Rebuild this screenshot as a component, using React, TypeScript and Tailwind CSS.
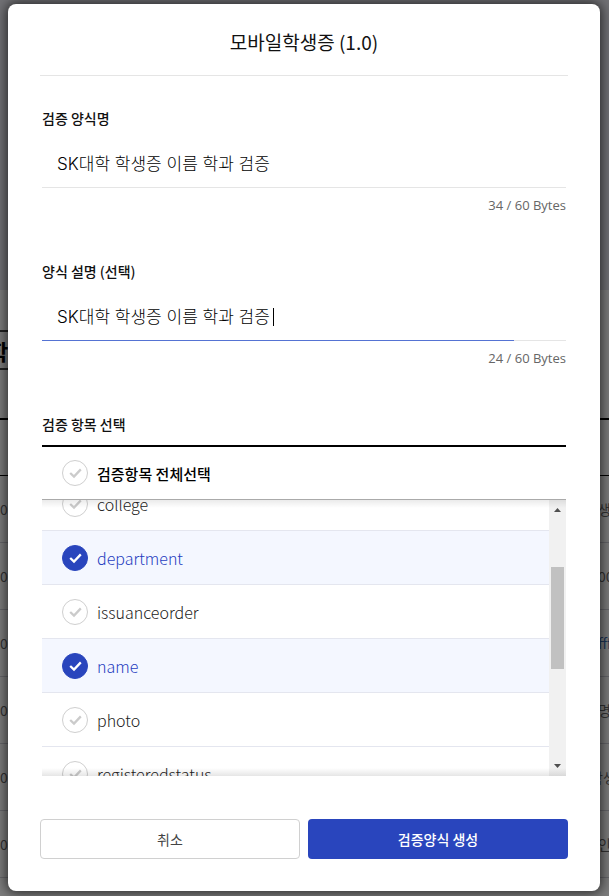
import { useLayoutEffect, useRef, useState } from "react";

const attributes = [
  { id: "college", checked: false },
  { id: "department", checked: true },
  { id: "issuanceorder", checked: false },
  { id: "name", checked: true },
  { id: "photo", checked: false },
  { id: "registeredstatus", checked: false },
];

const tableRows = [
  { code: "0", value: "생", style: "w-[11px] text-[#333]" },
  { code: "0", value: "00", style: "w-[11px] text-[#333]" },
  { code: "0", value: "fff", style: "w-[11px] text-[#1d3557]" },
  { code: "0", value: "명", style: "w-[11px] text-[#333]" },
  { code: "0", value: "학생", style: "w-[19px] text-[#333]" },
  { code: "0", value: "인", style: "w-[11px] text-[#333]" },
];

function BackgroundPage() {
  return (
    <div aria-hidden="true" className="absolute inset-0 overflow-hidden bg-[#7d7d7d]">
      <div className="h-[290px] bg-[#727276]" />
      <div className="mt-10 flex h-10 w-32 items-center border-y-2 border-[#222] text-[22px] font-bold text-black">
        <span className="-ml-3">학</span>
      </div>
      <div className="mt-12 h-[58px] border-t-2 border-b border-black" />
      {tableRows.map((row, i) => (
        <div
          key={i}
          className="flex h-[67px] items-center justify-between border-b border-[#66666a] text-[14px]"
        >
          <span className="w-3 text-[#333]">{row.code}</span>
          <span className={`whitespace-nowrap ${row.style}`}>{row.value}</span>
        </div>
      ))}
    </div>
  );
}

function RoundCheck({
  id,
  checked,
  onChange,
}: {
  id: string;
  checked: boolean;
  onChange: () => void;
}) {
  return (
    <span className="relative flex size-[26px] shrink-0">
      <input
        id={id}
        type="checkbox"
        checked={checked}
        onChange={onChange}
        className="peer size-[26px] appearance-none rounded-full border border-[#cfcfcf] bg-white checked:border-[#2945bd] checked:bg-[#2945bd]"
      />
      <svg
        viewBox="0 0 26 26"
        className="pointer-events-none absolute inset-0 size-[26px] text-[#cbcbcb] peer-checked:text-white"
        fill="none"
        stroke="currentColor"
        strokeWidth="2.3"
      >
        <path d="M8.2 13 L12 16.6 L18.8 9.4" />
      </svg>
    </span>
  );
}

function TextField({
  id,
  label,
  initial,
  bytes,
  active = false,
}: {
  id: string;
  label: string;
  initial: string;
  bytes: number;
  active?: boolean;
}) {
  const [value, setValue] = useState(initial);
  return (
    <div>
      <label htmlFor={id} className="block text-[14px] leading-5 font-medium text-[#111]">
        {label}
      </label>
      <div className="relative mt-3">
        <input
          id={id}
          type="text"
          value={value}
          onChange={(e) => setValue(e.target.value)}
          className="block h-12 w-full border-b border-[#e5e5e5] px-[15px] pb-0.5 font-['Inter','Noto_Sans_CJK_KR',sans-serif] text-[17px] font-light text-black outline-none"
        />
        {active && (
          <>
            <span className="absolute top-[15px] left-[231px] h-[18px] w-px bg-black" />
            <span className="absolute bottom-0 left-0 h-px w-[90%] bg-[#5573d3]" />
          </>
        )}
      </div>
      <p className="mt-[7px] text-right font-['Open_Sans','Noto_Sans_CJK_KR',sans-serif] text-[13px] leading-5 text-[#666]">
        {bytes} / 60 Bytes
      </p>
    </div>
  );
}

function AttributeList() {
  const [items, setItems] = useState(attributes);
  const listRef = useRef<HTMLUListElement>(null);
  const allChecked = items.every((item) => item.checked);

  useLayoutEffect(() => {
    if (listRef.current) listRef.current.scrollTop = 23;
  }, []);

  const toggle = (id: string) =>
    setItems(items.map((item) => (item.id === id ? { ...item, checked: !item.checked } : item)));

  return (
    <fieldset>
      <legend className="block text-[14px] leading-5 font-medium text-[#111]">검증 항목 선택</legend>
      <div className="mt-[11px] flex h-[55px] items-center gap-[9px] border-t-2 border-b border-t-black border-b-[#aaa] px-5">
        <RoundCheck
          id="all"
          checked={allChecked}
          onChange={() => setItems(items.map((item) => ({ ...item, checked: !allChecked })))}
        />
        <label htmlFor="all" className="pt-0.5 text-[15px] font-medium text-black">
          검증항목 전체선택
        </label>
      </div>
      <div className="relative flex h-[276px]">
        <ul ref={listRef} className="min-w-0 flex-1 overflow-hidden">
          {items.map((item) => (
            <li
              key={item.id}
              className={`flex h-[54px] items-center gap-[9px] border-b border-[#e4e6ef] px-5 ${
                item.checked ? "bg-[#f4f7ff] text-[#1f3cc0]" : "text-[#222]"
              }`}
            >
              <RoundCheck id={item.id} checked={item.checked} onChange={() => toggle(item.id)} />
              <label htmlFor={item.id} className="text-[16px] font-light">
                {item.id}
              </label>
            </li>
          ))}
        </ul>
        <div aria-hidden="true" className="flex w-[17px] flex-col items-center justify-between bg-[#f1f1f1] py-2">
          <svg viewBox="0 0 7 4" className="h-1 w-[7px] fill-[#505050]">
            <path d="M0 4 L3.5 0 L7 4 Z" />
          </svg>
          <div className="-mt-10 h-[102px] w-[13px] bg-[#c1c1c1]" />
          <svg viewBox="0 0 7 4" className="h-1 w-[7px] fill-[#505050]">
            <path d="M0 0 L3.5 4 L7 0 Z" />
          </svg>
        </div>
        <div className="pointer-events-none absolute inset-x-0 top-0 h-2 bg-linear-to-b from-black/8 to-transparent" />
        <div className="pointer-events-none absolute inset-x-0 bottom-0 h-2 bg-linear-to-t from-black/10 to-transparent" />
      </div>
    </fieldset>
  );
}

export default function App() {
  return (
    <div className="relative min-h-screen overflow-hidden font-['Noto_Sans_CJK_KR',sans-serif]">
      <BackgroundPage />
      <div className="relative pt-1 pr-[9px] pb-[5px] pl-2">
        <section
          role="dialog"
          aria-labelledby="title"
          className="rounded-lg bg-white px-8 pb-8 shadow-[0_0_12px_2px_rgba(0,0,0,0.65)]"
        >
          <h1
            id="title"
            className="flex h-[72px] items-center justify-center border-b border-[#e5e5e5] pt-1.5 text-[19px] text-[#111]"
          >
            모바일학생증 (1.0)
          </h1>
          <form className="pt-8" onSubmit={(e) => e.preventDefault()}>
            <div className="flex flex-col gap-[46px] px-0.5">
              <TextField id="form-name" label="검증 양식명" initial="SK대학 학생증 이름 학과 검증" bytes={34} />
              <TextField
                id="form-desc"
                label="양식 설명 (선택)"
                initial="SK대학 학생증 이름 학과 검증"
                bytes={24}
                active
              />
              <AttributeList />
            </div>
            <div className="mt-[43px] grid grid-cols-2 gap-2">
              <button type="button" className="h-10 rounded border border-[#d0d0d0] bg-white text-[14px] text-[#444]">
                취소
              </button>
              <button type="submit" className="h-10 rounded bg-[#2945bd] text-[14px] font-medium text-white">
                검증양식 생성
              </button>
            </div>
          </form>
        </section>
      </div>
    </div>
  );
}
